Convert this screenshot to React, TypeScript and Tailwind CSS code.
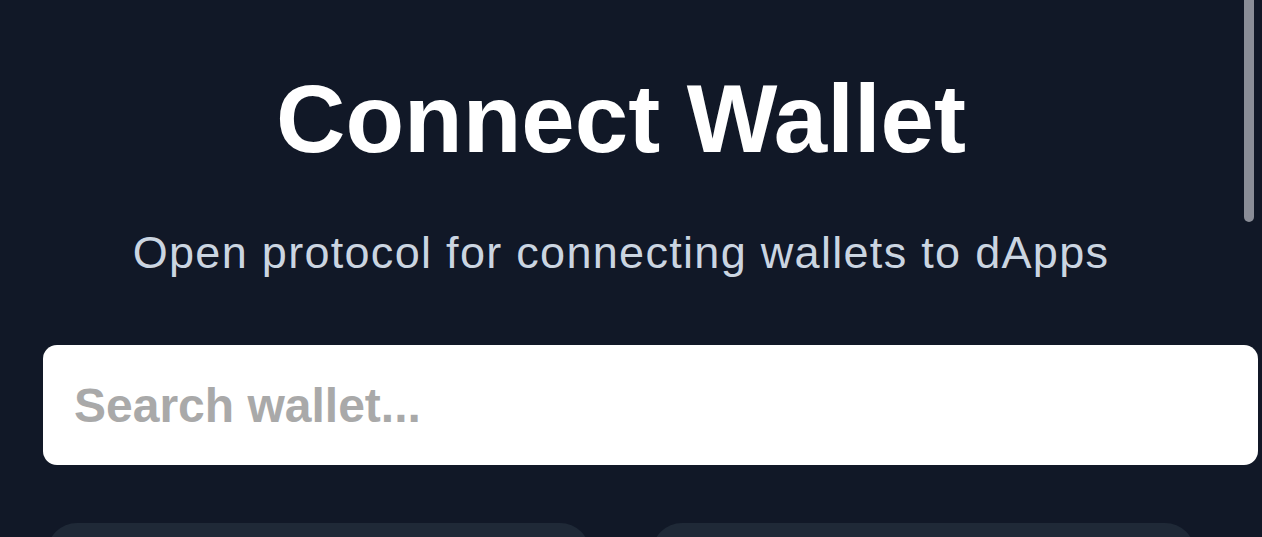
import React from 'react'

const wallets = ['MetaMask', 'Trust Wallet']

export default function App() {
  return (
    <div className="relative h-screen overflow-hidden bg-[#111827] font-['Liberation_Sans',Arial,sans-serif]">
      <div className="w-[1242px] px-[47px] pt-[61px]">
        <h1 className="text-center text-[96px] font-bold leading-[115px] text-white">
          Connect Wallet
        </h1>
        <p className="mt-[45px] text-center text-[45px] leading-[63px] tracking-[1.3px] text-[#cbd5e1]">
          Open protocol for connecting wallets to dApps
        </p>

        <input
          type="text"
          placeholder="Search wallet..."
          className="mt-[61px] -ml-[4px] block h-[120px] w-[1215px] rounded-[14px] bg-white px-[31px] text-[48px] font-bold text-gray-800 outline-none placeholder:text-[#a9a9a9]"
        />

        <div className="mt-[58px] grid grid-cols-2 gap-[62px]">
          {wallets.map((name) => (
            <div key={name} className="h-[200px] rounded-[30px] bg-[#1f2937]" aria-label={name} />
          ))}
        </div>
      </div>

      {/* overlay scrollbar */}
      <div className="absolute right-[8px] top-[-12px] h-[234px] w-[10px] rounded-full bg-[#8a8d97]" />
    </div>
  )
}
